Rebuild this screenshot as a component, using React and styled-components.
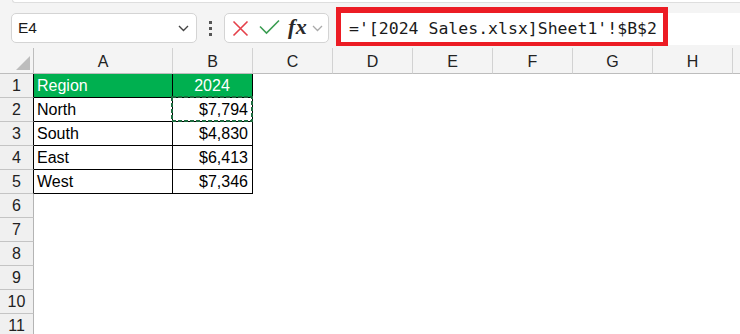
import React from "react";
import styled, { createGlobalStyle } from "styled-components";

const Global = createGlobalStyle`
  html, body { margin: 0; padding: 0; background: #fff; }
  body { font-family: "Liberation Sans", Arial, sans-serif; }
`;

const COLS = ["A", "B", "C", "D", "E", "F", "G", "H", ""];
const DATA = [
  ["Region", "2024"],
  ["North", "$7,794"],
  ["South", "$4,830"],
  ["East", "$6,413"],
  ["West", "$7,346"],
];
const ROWS = 11;

const App = () => {
  return (
    <Page>
      <Global />
      <Top>
        <Strip />
        <Bar>
          <NameBox>
            <span>E4</span>
            <svg width="11" height="7" viewBox="0 0 11 7">
              <path d="M1 1l4.5 4.5L10 1" fill="none" stroke="#444" strokeWidth="1.4" />
            </svg>
          </NameBox>
          <Dots>
            <i />
            <i />
            <i />
          </Dots>
          <ActionBox>
            <svg width="17" height="17" viewBox="0 0 17 17">
              <path d="M1.5 1.5l14 14M15.5 1.5l-14 14" stroke="#e5404a" strokeWidth="1.6" fill="none" />
            </svg>
            <svg width="21" height="16" viewBox="0 0 21 16">
              <path d="M1 7.5l6.5 6.5L20 1.5" stroke="#3b9d52" strokeWidth="1.6" fill="none" />
            </svg>
            <Fx>fx</Fx>
            <svg width="11" height="7" viewBox="0 0 11 7">
              <path d="M1 1l4.5 4.5L10 1" fill="none" stroke="#aaa" strokeWidth="1.3" />
            </svg>
          </ActionBox>
          <FormulaBar>
            <Highlight>
              <Formula>='[2024 Sales.xlsx]Sheet1'!$B$2</Formula>
            </Highlight>
          </FormulaBar>
        </Bar>
      </Top>
      <Grid>
        <Corner>
          <svg width="16" height="16" viewBox="0 0 16 16">
            <path d="M15 1V15H1Z" fill="#bdbdbd" />
          </svg>
        </Corner>
        {COLS.map((c, i) => (
          <ColHead key={"c" + i}>{c}</ColHead>
        ))}
        {Array.from({ length: ROWS }).map((_, r) => (
          <React.Fragment key={r}>
            <RowHead $edge={r < DATA.length}>{r + 1}</RowHead>
            {COLS.map((_, c) => {
              const row = DATA[r];
              if (row && c < 2) {
                return (
                  <Cell
                    key={c}
                    $table
                    $head={r === 0}
                    $align={r === 0 ? (c === 1 ? "center" : "left") : c === 1 ? "right" : "left"}
                  >
                    {row[c]}
                    {r === 1 && c === 1 && (
                      <Marquee>
                        <rect x="1" y="1" />
                      </Marquee>
                    )}
                  </Cell>
                );
              }
              return <Cell key={c} />;
            })}
          </React.Fragment>
        ))}
      </Grid>
    </Page>
  );
};
export default App;

const Page = styled.div`
  width: 740px;
  height: 334px;
  overflow: hidden;
  background: #fff;
`;

const Top = styled.div`
  background: #f4f4f4;
  height: 48px;
  display: flex;
  flex-direction: column;
`;

const Strip = styled.div`
  height: 2px;
  margin-left: 12px;
  background: #fff;
  border-left: 1px solid #dedede;
  border-bottom: 1px solid #dedede;
  border-bottom-left-radius: 5px;
`;

const Bar = styled.div`
  display: flex;
  align-items: flex-start;
  padding: 10px 0 0 11px;
`;

const NameBox = styled.div`
  box-sizing: border-box;
  width: 186px;
  height: 30px;
  background: #fff;
  border: 1px solid #d4d4d4;
  border-radius: 5px;
  display: flex;
  align-items: center;
  justify-content: space-between;
  padding: 0 7px 0 6px;
  font-size: 15.5px;
  color: #1a1a1a;
`;

const Dots = styled.div`
  width: 27px;
  height: 30px;
  display: flex;
  flex-direction: column;
  align-items: center;
  justify-content: center;
  gap: 3px;
  i {
    width: 3px;
    height: 3px;
    background: #555;
  }
`;

const ActionBox = styled.div`
  box-sizing: border-box;
  width: 105px;
  height: 30px;
  background: #fff;
  border: 1px solid #d4d4d4;
  border-radius: 5px;
  display: flex;
  align-items: center;
  padding: 0 0 0 7px;
  gap: 8px;
  svg:nth-child(2) {
    margin-left: 2px;
    margin-top: -2px;
  }
  svg:last-child {
    margin-left: -3px;
  }
`;

const Fx = styled.span`
  font-family: "Liberation Serif", "Times New Roman", serif;
  font-style: italic;
  font-weight: 600;
  font-size: 22px;
  color: #2a2a2a;
  margin-top: -3px;
  letter-spacing: 0.5px;
`;

const FormulaBar = styled.div`
  flex: 1;
  margin-left: 7px;
  height: 32px;
  background: #fff;
  position: relative;
`;

const Highlight = styled.div`
  position: absolute;
  left: 0;
  top: -6px;
  width: 332px;
  height: 39px;
  box-sizing: border-box;
  border: 5px solid #ec1c24;
  border-top-width: 6px;
  border-bottom-width: 4px;
  display: flex;
  align-items: center;
  padding-left: 8px;
`;

const Formula = styled.span`
  font-family: "DejaVu Sans Mono", "Liberation Mono", monospace;
  font-size: 16.5px;
  color: #1a1a1a;
  white-space: pre;
  margin-top: 1px;
`;

const Grid = styled.div`
  display: grid;
  grid-template-columns: 34px 139px repeat(7, 80px) 1fr;
  grid-template-rows: 26px;
  grid-auto-rows: 24px;
  font-size: 16px;
`;

const Corner = styled.div`
  background: #f4f4f4;
  border-right: 1px solid #bdbdbd;
  border-bottom: 1px solid #bdbdbd;
  display: flex;
  align-items: flex-end;
  justify-content: flex-end;
  padding: 0 2px 2px 0;
`;

const ColHead = styled.div`
  background: #f4f4f4;
  border-right: 1px solid #d2d2d2;
  border-bottom: 1px solid #bdbdbd;
  display: flex;
  align-items: center;
  justify-content: center;
  padding-top: 2px;
  color: #222;
`;

const RowHead = styled.div`
  background: #f0f0f0;
  border-right: 1px solid ${(p) => (p.$edge ? "#000" : "#b4b4b4")};
  border-bottom: 1px solid #c4c4c4;
  display: flex;
  align-items: center;
  justify-content: center;
  color: #222;
`;

const Cell = styled.div`
  position: relative;
  display: flex;
  align-items: center;
  justify-content: ${(p) =>
    p.$align === "right" ? "flex-end" : p.$align === "center" ? "center" : "flex-start"};
  padding: 0 4px 0 3px;
  background: ${(p) => (p.$head ? "#00b050" : "#fff")};
  color: ${(p) => (p.$head ? "#fff" : "#000")};
  border-right: 1px solid ${(p) => (p.$table ? "#000" : "transparent")};
  border-bottom: 1px solid ${(p) => (p.$table ? "#000" : "transparent")};
  white-space: nowrap;
`;

const Marquee = styled.svg`
  position: absolute;
  z-index: 1;
  left: -2px;
  top: -2px;
  width: calc(100% + 3px);
  height: calc(100% + 3px);
  overflow: visible;
  pointer-events: none;
  rect {
    width: calc(100% - 2px);
    height: calc(100% - 2px);
    fill: none;
    stroke: #1d6b3f;
    stroke-width: 2px;
    stroke-dasharray: 4 2;
  }
`;
